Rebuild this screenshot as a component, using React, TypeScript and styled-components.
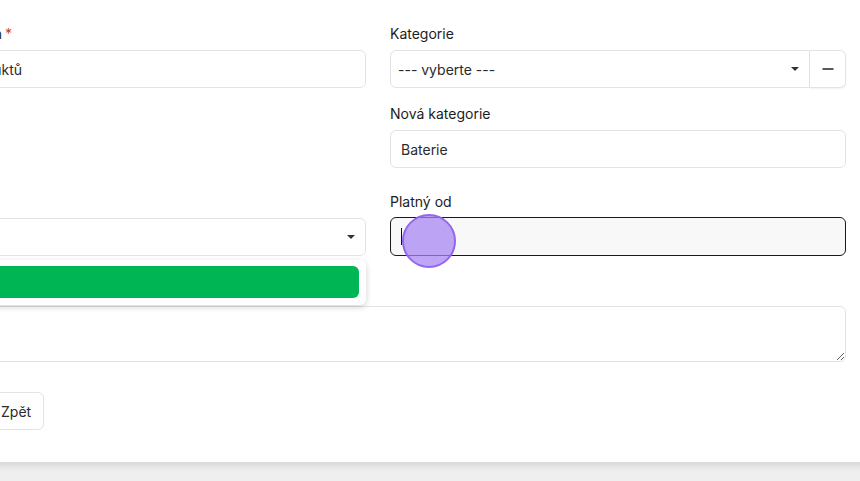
import React from "react";
import styled, { createGlobalStyle } from "styled-components";

const GlobalStyle = createGlobalStyle`
  html, body {
    margin: 0;
    padding: 0;
    background: #efefef;
    font-family: Inter, "Noto Sans", "Liberation Sans", sans-serif;
    overflow: hidden;
  }
  * { box-sizing: border-box; }
`;

const Viewport = styled.div`
  width: 860px;
  height: 481px;
  overflow: hidden;
  background: #efefef;
`;

const Card = styled.div`
  width: 984px;
  margin-left: -114px;
  padding: 24px 24px 32px;
  background: #fff;
  box-shadow: 0 3px 8px rgba(0, 0, 0, 0.12);
`;

const FormGrid = styled.div`
  display: grid;
  grid-template-columns: 456px 456px;
  column-gap: 24px;
`;

const Field = styled.div<{ $top?: number; $full?: boolean; $minHeight?: number }>`
  display: flex;
  flex-direction: column;
  gap: 6px;
  position: relative;
  margin-top: ${({ $top }) => $top ?? 0}px;
  grid-column: ${({ $full }) => ($full ? "1 / -1" : "auto")};
  min-height: ${({ $minHeight }) => ($minHeight ? `${$minHeight}px` : "auto")};
`;

const Label = styled.label`
  font-size: 14px;
  line-height: 20px;
  font-weight: 400;
  color: #1c1c1c;
`;

const Required = styled.span`
  color: #c4461c;
  margin-left: 3px;
`;

const TextInput = styled.input`
  height: 38px;
  width: 100%;
  border: 1px solid #e3e3e3;
  border-radius: 6px;
  padding: 0 10px;
  font-family: inherit;
  font-size: 14px;
  color: #2b2b2b;
  background: #fff;
  outline: none;
`;

const FocusedInput = styled.div`
  position: relative;
  height: 39px;
  margin-top: -1px;
  border: 1px solid #1a1a1a;
  border-radius: 6px;
  background: #f8f8f8;
  padding: 0 10px;
  display: flex;
  align-items: center;
`;

const Caret = styled.span`
  width: 1px;
  height: 17px;
  background: #111;
`;

const ClickMark = styled.span`
  position: absolute;
  left: 11px;
  top: -4px;
  width: 54px;
  height: 54px;
  border-radius: 50%;
  background: rgba(166, 130, 243, 0.72);
  border: 2px solid #9466ee;
`;

const Group = styled.div`
  display: flex;
  height: 38px;
`;

const SelectBox = styled.div<{ $grouped?: boolean }>`
  flex: 1;
  height: 38px;
  display: flex;
  align-items: center;
  justify-content: space-between;
  padding: 0 10px 0 7px;
  border: 1px solid #e3e3e3;
  border-radius: ${({ $grouped }) => ($grouped ? "6px 0 0 6px" : "6px")};
  font-size: 14px;
  color: #2b2b2b;
  background: #fff;
`;

const CaretDown = styled.span`
  width: 0;
  height: 0;
  border-left: 4px solid transparent;
  border-right: 4px solid transparent;
  border-top: 4px solid #333;
`;

const MinusButton = styled.button`
  width: 36px;
  height: 38px;
  border: 1px solid #e3e3e3;
  border-left: none;
  border-radius: 0 6px 6px 0;
  background: #fff;
  display: flex;
  align-items: center;
  justify-content: center;
  padding: 0;
  box-shadow: 0 1px 2px rgba(0, 0, 0, 0.05);
`;

const Menu = styled.div`
  position: absolute;
  left: 0;
  right: 0;
  top: calc(100% + 4px);
  padding: 6px 7px 7px 6px;
  background: #fff;
  border-radius: 6px;
  box-shadow: 0 2px 6px rgba(0, 0, 0, 0.18);
  z-index: 2;
`;

const MenuItem = styled.div`
  height: 32px;
  border-radius: 6px;
  background: #00b553;
`;

const TextArea = styled.textarea`
  height: 56px;
  width: 100%;
  border: 1px solid #e3e3e3;
  border-radius: 6px;
  padding: 8px 10px;
  font-family: inherit;
  font-size: 14px;
  outline: none;
`;

const Actions = styled.div`
  display: flex;
  gap: 8px;
  margin-top: 30px;
`;

const Button = styled.button<{ $primary?: boolean }>`
  height: 38px;
  padding: 0 12px;
  border-radius: 6px;
  border: 1px solid ${({ $primary }) => ($primary ? "#00b553" : "#e3e3e3")};
  background: ${({ $primary }) => ($primary ? "#00b553" : "#fff")};
  color: ${({ $primary }) => ($primary ? "#fff" : "#2b2b2b")};
  font-family: inherit;
  font-size: 14px;
  min-width: ${({ $primary }) => ($primary ? "70px" : "0")};
`;

const App: React.FC = () => {
  return (
    <>
      <GlobalStyle />
      <Viewport>
        <Card>
          <FormGrid>
            <Field>
              <Label>
                Dodací region<Required>*</Required>
              </Label>
              <TextInput readOnly value="Ceník produktů" />
            </Field>
            <Field>
              <Label>Kategorie</Label>
              <Group>
                <SelectBox $grouped>
                  --- vyberte ---
                  <CaretDown />
                </SelectBox>
                <MinusButton aria-label="Odebrat">
                  <svg width="12" height="12" viewBox="0 0 12 12">
                    <path d="M0.5 6h11" stroke="#222" strokeWidth="1.5" />
                  </svg>
                </MinusButton>
              </Group>
            </Field>

            <Field $top={16} $minHeight={72} />
            <Field $top={16}>
              <Label>Nová kategorie</Label>
              <TextInput readOnly value="Baterie" />
            </Field>

            <Field $top={16}>
              <Label>Měna</Label>
              <SelectBox>
                CZK
                <CaretDown />
              </SelectBox>
              <Menu>
                <MenuItem />
              </Menu>
            </Field>
            <Field $top={16}>
              <Label>Platný od</Label>
              <FocusedInput>
                <Caret />
                <ClickMark />
              </FocusedInput>
            </Field>

            <Field $top={24} $full>
              <Label>Poznámka</Label>
              <TextArea />
            </Field>
          </FormGrid>
          <Actions>
            <Button $primary>Uložit</Button>
            <Button>Zpět</Button>
          </Actions>
        </Card>
      </Viewport>
    </>
  );
};

export default App;
